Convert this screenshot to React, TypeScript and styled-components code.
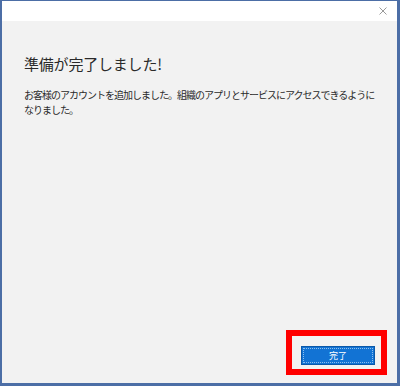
import React from "react";
import styled, { createGlobalStyle } from "styled-components";

const GlobalStyle = createGlobalStyle`
  html, body {
    margin: 0;
    padding: 0;
    background: #ffffff;
  }
  body {
    font-family: "Noto Sans CJK JP", "Noto Sans", sans-serif;
  }
`;

const Window = styled.div`
  box-sizing: border-box;
  width: 400px;
  height: 386px;
  display: flex;
  flex-direction: column;
  border-style: solid;
  border-color: #4c6ea6;
  border-width: 1px 3px 3px 2px;
  background: #f2f2f2;
`;

const TitleBar = styled.div`
  height: 20px;
  background: #ffffff;
  display: flex;
  justify-content: flex-end;
  align-items: center;
  padding-right: 10px;
`;

const CloseButton = styled.button`
  border: 0;
  background: transparent;
  padding: 0;
  width: 9px;
  height: 9px;
  display: flex;
  align-items: center;
  justify-content: center;
  cursor: default;
`;

const Body = styled.div`
  flex: 1;
  display: flex;
  flex-direction: column;
  padding: 33px 0 0 22px;
`;

const Heading = styled.h1`
  margin: 0;
  font-size: 15px;
  line-height: 20px;
  font-weight: 400;
  color: #2a2a2a;
  letter-spacing: -0.2px;
`;

const Message = styled.p`
  margin: 13px 0 0;
  width: 358px;
  font-size: 10px;
  line-height: 15px;
  letter-spacing: -1px;
  color: #2a2a2a;
`;

const Footer = styled.div`
  margin-top: auto;
  display: flex;
  justify-content: flex-end;
  padding: 0 10px 8px 0;
`;

const Highlight = styled.div`
  border: 6px solid #ff0000;
  padding: 4px 6px 4px 9px;
  background: #f2f2f2;
`;

const PrimaryButton = styled.button`
  box-sizing: border-box;
  width: 74px;
  height: 19px;
  padding: 1px;
  border: 1px solid #0b58a8;
  background: #1273d4;
  color: #ffffff;
  font-family: "Noto Sans CJK JP", sans-serif;
  font-size: 9px;
  cursor: pointer;
`;

const FocusRing = styled.span`
  box-sizing: border-box;
  display: flex;
  align-items: center;
  justify-content: center;
  width: 100%;
  height: 100%;
  border: 1px dotted #8fc0ee;
`;

export default function App() {
  return (
    <>
      <GlobalStyle />
      <Window>
        <TitleBar>
          <CloseButton aria-label="閉じる">
            <svg width="8" height="8" viewBox="0 0 8 8">
              <path d="M0.5 0.5 L7.5 7.5 M7.5 0.5 L0.5 7.5" stroke="#9a9a9a" strokeWidth="1" />
            </svg>
          </CloseButton>
        </TitleBar>
        <Body>
          <Heading>準備が完了しました!</Heading>
          <Message>
            お客様のアカウントを追加しました。組織のアプリとサービスにアクセスできるようになりました。
          </Message>
          <Footer>
            <Highlight>
              <PrimaryButton>
                <FocusRing>完了</FocusRing>
              </PrimaryButton>
            </Highlight>
          </Footer>
        </Body>
      </Window>
    </>
  );
}
